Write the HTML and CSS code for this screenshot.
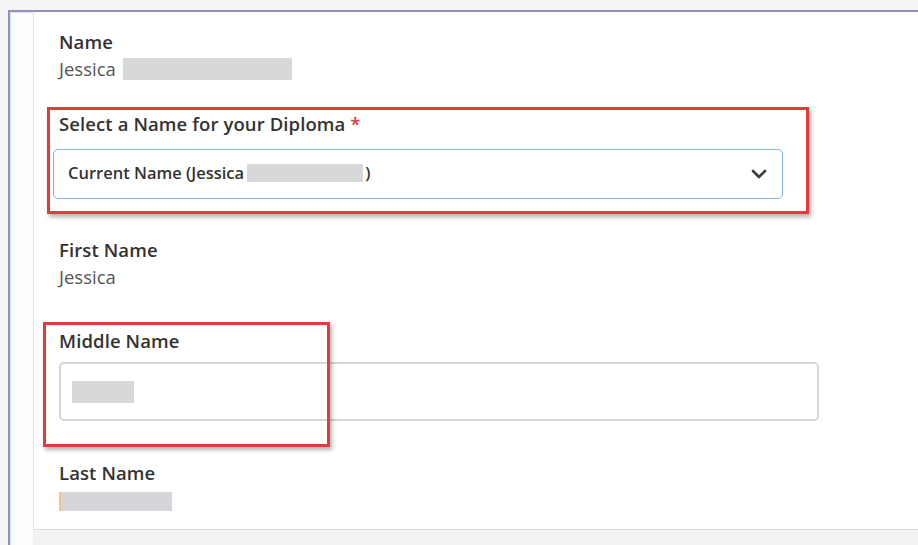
FILE: index.html
```html
<!DOCTYPE html>
<html lang="en">
<head>
<meta charset="utf-8">
<title>Diploma Name</title>
<link rel="stylesheet" href="styles.css">
</head>
<body>
<div class="frame">
  <div class="card">
    <div class="field field-name">
      <div class="label">Name</div>
      <div class="value">Jessica <span class="redact redact-name"></span></div>
    </div>

    <div class="field field-diploma">
      <div class="label">Select a Name for your Diploma <span class="req">*</span></div>
      <div class="select">
        <span class="select-text">Current Name (Jessica <span class="redact redact-select"></span>)</span>
        <svg class="chevron" width="16" height="10" viewBox="0 0 16 10" aria-hidden="true">
          <path d="M2 2 L8 8 L14 2" fill="none" stroke="#3c3c3c" stroke-width="2.6" stroke-linecap="round" stroke-linejoin="round"/>
        </svg>
      </div>
    </div>

    <div class="field field-first">
      <div class="label">First Name</div>
      <div class="value">Jessica</div>
    </div>

    <div class="field field-middle">
      <div class="label">Middle Name</div>
      <div class="input"><span class="redact redact-middle"></span></div>
    </div>

    <div class="field field-last">
      <div class="label">Last Name</div>
      <div class="value value-last"><span class="caret"></span><span class="redact redact-last"></span></div>
    </div>

    <div class="mark mark-diploma"></div>
    <div class="mark mark-middle"></div>
  </div>
  <div class="frame-foot"></div>
</div>
</body>
</html>
```

FILE: styles.css
```css
html, body {
  margin: 0;
  padding: 0;
}

body {
  background: #f4f4f4;
  font-family: "Open Sans", "Noto Sans", sans-serif;
  color: #333;
  padding-top: 10px;
  padding-left: 8px;
  overflow: hidden;
  height: 545px;
  box-sizing: border-box;
}

.frame {
  background: #fdfdfd;
  border-top: 2px solid #9a8db8;
  border-left: 2px solid #9a8db8;
  box-shadow: inset 1px 1px 0 #cfe6f3;
  padding-left: 23px;
  height: 560px;
}

.card {
  position: relative;
  background: #ffffff;
  border-left: 1px solid #e2e2e2;
  border-bottom: 1px solid #dcdcdc;
  padding: 16px 0 18px 25px;
}

.frame-foot {
  height: 40px;
  background: #f2f2f2;
}

.field {
  display: flex;
  flex-direction: column;
  align-items: flex-start;
}

.label {
  font-size: 18.5px;
  font-weight: 600;
  line-height: 27px;
  color: #333;
  letter-spacing: 0.1px;
}

.value {
  font-size: 18.5px;
  line-height: 27px;
  color: #555;
  display: flex;
  align-items: center;
  gap: 7px;
}

.req {
  color: #d9363e;
}

.redact {
  display: inline-block;
  background: #d8d8d8;
}

.redact-name {
  width: 169px;
  height: 22px;
}

.field-diploma {
  margin-top: 28px;
}

.select {
  margin-top: 12px;
  margin-left: -6px;
  width: 730px;
  height: 50px;
  box-sizing: border-box;
  border: 1px solid #85b4e0;
  border-radius: 5px;
  display: flex;
  align-items: center;
  justify-content: space-between;
  padding: 0 15px 3px 14px;
}

.select-text {
  font-size: 16.5px;
  font-weight: 600;
  color: #333;
  display: flex;
  align-items: center;
}

.chevron {
  margin-top: 3px;
}

.redact-select {
  width: 116px;
  height: 18px;
  margin-left: 3px;
  margin-right: 2px;
}

.field-first {
  margin-top: 37px;
}

.field-middle {
  margin-top: 37px;
}

.input {
  margin-top: 8px;
  width: 760px;
  height: 59px;
  box-sizing: border-box;
  border: 2px solid #d6d6d6;
  border-radius: 5px;
  display: flex;
  align-items: center;
  padding-left: 11px;
}

.redact-middle {
  width: 62px;
  height: 22px;
}

.field-last {
  margin-top: 38px;
}

.value-last {
  margin-top: 6px;
}

.caret {
  display: inline-block;
  width: 2px;
  height: 19px;
  background: #f2c48a;
  margin-right: -7px;
}

.redact-last {
  width: 111px;
  height: 19px;
  background: #d4d6d9;
}

/* red highlight outlines drawn over the form */
.mark {
  position: absolute;
  border: 3px solid #e5393e;
  box-shadow: 2px 3px 4px rgba(0, 0, 0, 0.3);
  box-sizing: border-box;
}

.mark-diploma {
  left: 13px;
  top: 95px;
  width: 762px;
  height: 107px;
}

.mark-middle {
  left: 9px;
  top: 310px;
  width: 287px;
  height: 125px;
}
```
